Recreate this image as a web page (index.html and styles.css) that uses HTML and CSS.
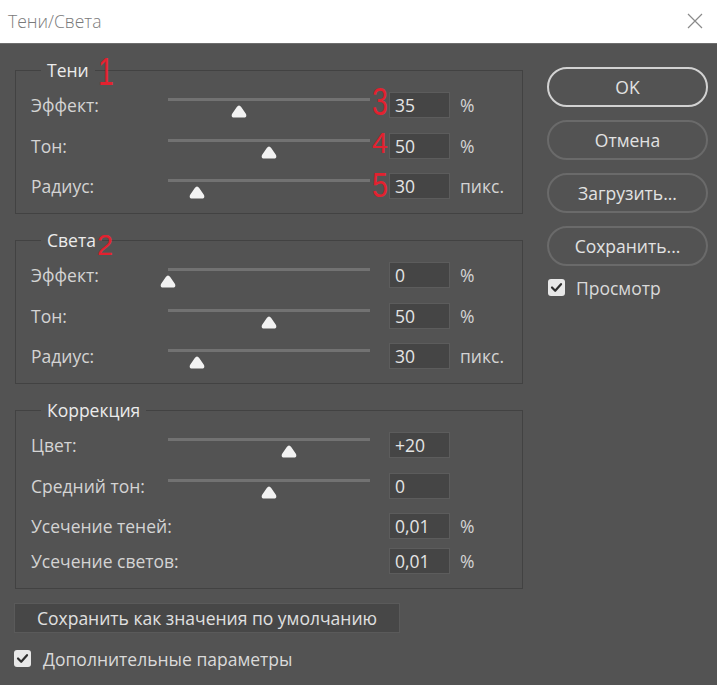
FILE: index.html
```html
<!DOCTYPE html>
<html lang="ru">
<head>
<meta charset="utf-8">
<title>Тени/Света</title>
<link rel="stylesheet" href="styles.css">
</head>
<body>
<div class="titlebar">
  <span class="title">Тени/Света</span>
  <svg class="close" width="16" height="16" viewBox="0 0 16 16"><path d="M1 1 L15 15 M15 1 L1 15" stroke="#8a8a8a" stroke-width="1.2" fill="none"/></svg>
</div>
<div class="main">
  <div class="left">
    <fieldset class="group g1">
      <legend>Тени</legend>
      <div class="row">
        <span class="label">Эффект:</span>
        <div class="slider"><div class="track"></div><svg class="thumb" style="left:35%" width="16" height="13" viewBox="0 0 16 13"><path d="M8 0.5 Q9.2 0.5 10.2 2 L15 9 Q16 11.5 14 12.5 L2 12.5 Q0 11.5 1 9 L5.8 2 Q6.8 0.5 8 0.5 Z" fill="#f2f2f2"/></svg></div>
        <span class="field">35</span><span class="unit">%</span>
      </div>
      <div class="row">
        <span class="label">Тон:</span>
        <div class="slider"><div class="track"></div><svg class="thumb" style="left:50%" width="16" height="13" viewBox="0 0 16 13"><path d="M8 0.5 Q9.2 0.5 10.2 2 L15 9 Q16 11.5 14 12.5 L2 12.5 Q0 11.5 1 9 L5.8 2 Q6.8 0.5 8 0.5 Z" fill="#f2f2f2"/></svg></div>
        <span class="field">50</span><span class="unit">%</span>
      </div>
      <div class="row">
        <span class="label">Радиус:</span>
        <div class="slider"><div class="track"></div><svg class="thumb" style="left:14.4%" width="16" height="13" viewBox="0 0 16 13"><path d="M8 0.5 Q9.2 0.5 10.2 2 L15 9 Q16 11.5 14 12.5 L2 12.5 Q0 11.5 1 9 L5.8 2 Q6.8 0.5 8 0.5 Z" fill="#f2f2f2"/></svg></div>
        <span class="field">30</span><span class="unit">пикс.</span>
      </div>
    </fieldset>
    <fieldset class="group">
      <legend>Света</legend>
      <div class="row">
        <span class="label">Эффект:</span>
        <div class="slider"><div class="track"></div><svg class="thumb" style="left:0%" width="16" height="13" viewBox="0 0 16 13"><path d="M8 0.5 Q9.2 0.5 10.2 2 L15 9 Q16 11.5 14 12.5 L2 12.5 Q0 11.5 1 9 L5.8 2 Q6.8 0.5 8 0.5 Z" fill="#f2f2f2"/></svg></div>
        <span class="field">0</span><span class="unit">%</span>
      </div>
      <div class="row">
        <span class="label">Тон:</span>
        <div class="slider"><div class="track"></div><svg class="thumb" style="left:50%" width="16" height="13" viewBox="0 0 16 13"><path d="M8 0.5 Q9.2 0.5 10.2 2 L15 9 Q16 11.5 14 12.5 L2 12.5 Q0 11.5 1 9 L5.8 2 Q6.8 0.5 8 0.5 Z" fill="#f2f2f2"/></svg></div>
        <span class="field">50</span><span class="unit">%</span>
      </div>
      <div class="row">
        <span class="label">Радиус:</span>
        <div class="slider"><div class="track"></div><svg class="thumb" style="left:14.4%" width="16" height="13" viewBox="0 0 16 13"><path d="M8 0.5 Q9.2 0.5 10.2 2 L15 9 Q16 11.5 14 12.5 L2 12.5 Q0 11.5 1 9 L5.8 2 Q6.8 0.5 8 0.5 Z" fill="#f2f2f2"/></svg></div>
        <span class="field">30</span><span class="unit">пикс.</span>
      </div>
    </fieldset>
    <fieldset class="group">
      <legend>Коррекция</legend>
      <div class="row">
        <span class="label">Цвет:</span>
        <div class="slider"><div class="track"></div><svg class="thumb" style="left:60%" width="16" height="13" viewBox="0 0 16 13"><path d="M8 0.5 Q9.2 0.5 10.2 2 L15 9 Q16 11.5 14 12.5 L2 12.5 Q0 11.5 1 9 L5.8 2 Q6.8 0.5 8 0.5 Z" fill="#f2f2f2"/></svg></div>
        <span class="field">+20</span>
      </div>
      <div class="row">
        <span class="label">Средний тон:</span>
        <div class="slider"><div class="track"></div><svg class="thumb" style="left:50%" width="16" height="13" viewBox="0 0 16 13"><path d="M8 0.5 Q9.2 0.5 10.2 2 L15 9 Q16 11.5 14 12.5 L2 12.5 Q0 11.5 1 9 L5.8 2 Q6.8 0.5 8 0.5 Z" fill="#f2f2f2"/></svg></div>
        <span class="field">0</span>
      </div>
      <div class="row">
        <span class="label wide">Усечение теней:</span>
        <span class="field">0,01</span><span class="unit">%</span>
      </div>
      <div class="row tight">
        <span class="label wide">Усечение светов:</span>
        <span class="field">0,01</span><span class="unit">%</span>
      </div>
    </fieldset>
    <div class="default-btn">Сохранить как значения по умолчанию</div>
    <div class="check-row bottom-check">
      <span class="checkbox"><svg width="17" height="17" viewBox="0 0 17 17"><path d="M4 8.5 L7.2 11.8 L13 5.2" stroke="#2e2e2e" stroke-width="2.2" fill="none" stroke-linecap="round" stroke-linejoin="round"/></svg></span>
      <span class="check-label">Дополнительные параметры</span>
    </div>
  </div>
  <div class="right">
    <div class="btn primary">OK</div>
    <div class="btn">Отмена</div>
    <div class="btn">Загрузить...</div>
    <div class="btn">Сохранить...</div>
    <div class="check-row preview-check">
      <span class="checkbox"><svg width="17" height="17" viewBox="0 0 17 17"><path d="M4 8.5 L7.2 11.8 L13 5.2" stroke="#2e2e2e" stroke-width="2.2" fill="none" stroke-linecap="round" stroke-linejoin="round"/></svg></span>
      <span class="check-label">Просмотр</span>
    </div>
  </div>
</div>
<span class="mark m1">1</span>
<span class="mark m2">2</span>
<span class="mark m3">3</span>
<span class="mark m4">4</span>
<span class="mark m5">5</span>
</body>
</html>
```

FILE: styles.css
```css
* { box-sizing: border-box; }
html, body { margin: 0; padding: 0; }
body {
  width: 717px;
  height: 685px;
  background: #535353;
  font-family: "Open Sans", "Noto Sans", sans-serif;
  font-size: 17.5px;
  color: #d4d4d4;
  position: relative;
  overflow: hidden;
}
.titlebar {
  height: 44px;
  background: #ffffff;
  border-bottom: 1px solid #6e6e6e;
  display: flex;
  align-items: center;
  justify-content: space-between;
  padding: 0 14px 2px 8px;
}
.title {
  font-size: 17.5px;
  font-weight: 300;
  color: #7a7a7a;
}
.close { display: block; }
.main {
  display: flex;
  padding: 16px 0 0 14px;
}
.left { width: 509px; }
.group {
  margin: 0 0 16px 1px;
  border: 1px solid #424242;
  padding: 12px 0 14px 15px;
  width: 508px;
  min-width: 0;
}
.group legend {
  margin-left: 10px;
  padding: 0 6px;
  line-height: 20px;
  color: #ececec;
}
.row {
  display: flex;
  align-items: center;
  height: 26px;
}
.row + .row { margin-top: 14.5px; }
.row.tight { margin-top: 9px; }
.label { width: 137px; flex: none; white-space: nowrap; }
.label.wide { width: 358px; }
.slider {
  width: 202px;
  height: 26px;
  flex: none;
  position: relative;
  margin-right: 19px;
}
.track {
  position: absolute;
  left: 0; right: 0;
  top: 6px;
  height: 3px;
  background: #727272;
}
.thumb {
  position: absolute;
  top: 13px;
  margin-left: -8px;
}
.field {
  width: 61px;
  height: 26px;
  flex: none;
  background: #454545;
  border: 1px solid #5c5c5c;
  color: #e4e4e4;
  padding-left: 5px;
  line-height: 24px;
}
.unit { margin-left: 10px; }
.default-btn {
  margin-top: -2px;
  width: 386px;
  height: 30px;
  background: #474747;
  border: 1px solid #5a5a5a;
  color: #e0e0e0;
  text-align: center;
  line-height: 28px;
  white-space: nowrap;
}
.check-row {
  display: flex;
  align-items: center;
  height: 17px;
}
.checkbox {
  width: 17px;
  height: 17px;
  border-radius: 3px;
  background: #e8e8e8;
  display: block;
  flex: none;
}
.checkbox svg { display: block; }
.check-label { margin-left: 12px; color: #dadada; white-space: nowrap; }
.bottom-check { margin-top: 17px; }
.right {
  margin-left: 24px;
  margin-top: 7px;
  width: 161px;
}
.btn {
  height: 40px;
  border: 2px solid #6a6a6a;
  border-radius: 20px;
  text-align: center;
  line-height: 36px;
  color: #e2e2e2;
  margin-bottom: 13px;
}
.btn.primary { border-color: #d2d2d2; }
.preview-check { margin-top: 8px; margin-left: 1px; }
.preview-check .check-label { margin-left: 11px; }
.mark {
  position: absolute;
  font-family: "Liberation Sans", Arial, sans-serif;
  line-height: 1;
  color: #e3212f;
  transform-origin: left top;
}
.m1 { left: 98px; top: 53px; font-size: 38px; transform: scaleX(0.75); }
.m2 { left: 97px; top: 231px; font-size: 29px; }
.m3 { left: 372px; top: 83px; font-size: 38px; transform: scaleX(0.75); }
.m4 { left: 372px; top: 128px; font-size: 30px; transform: scaleX(0.95); }
.m5 { left: 372px; top: 167px; font-size: 35px; transform: scaleX(0.82); }
```
